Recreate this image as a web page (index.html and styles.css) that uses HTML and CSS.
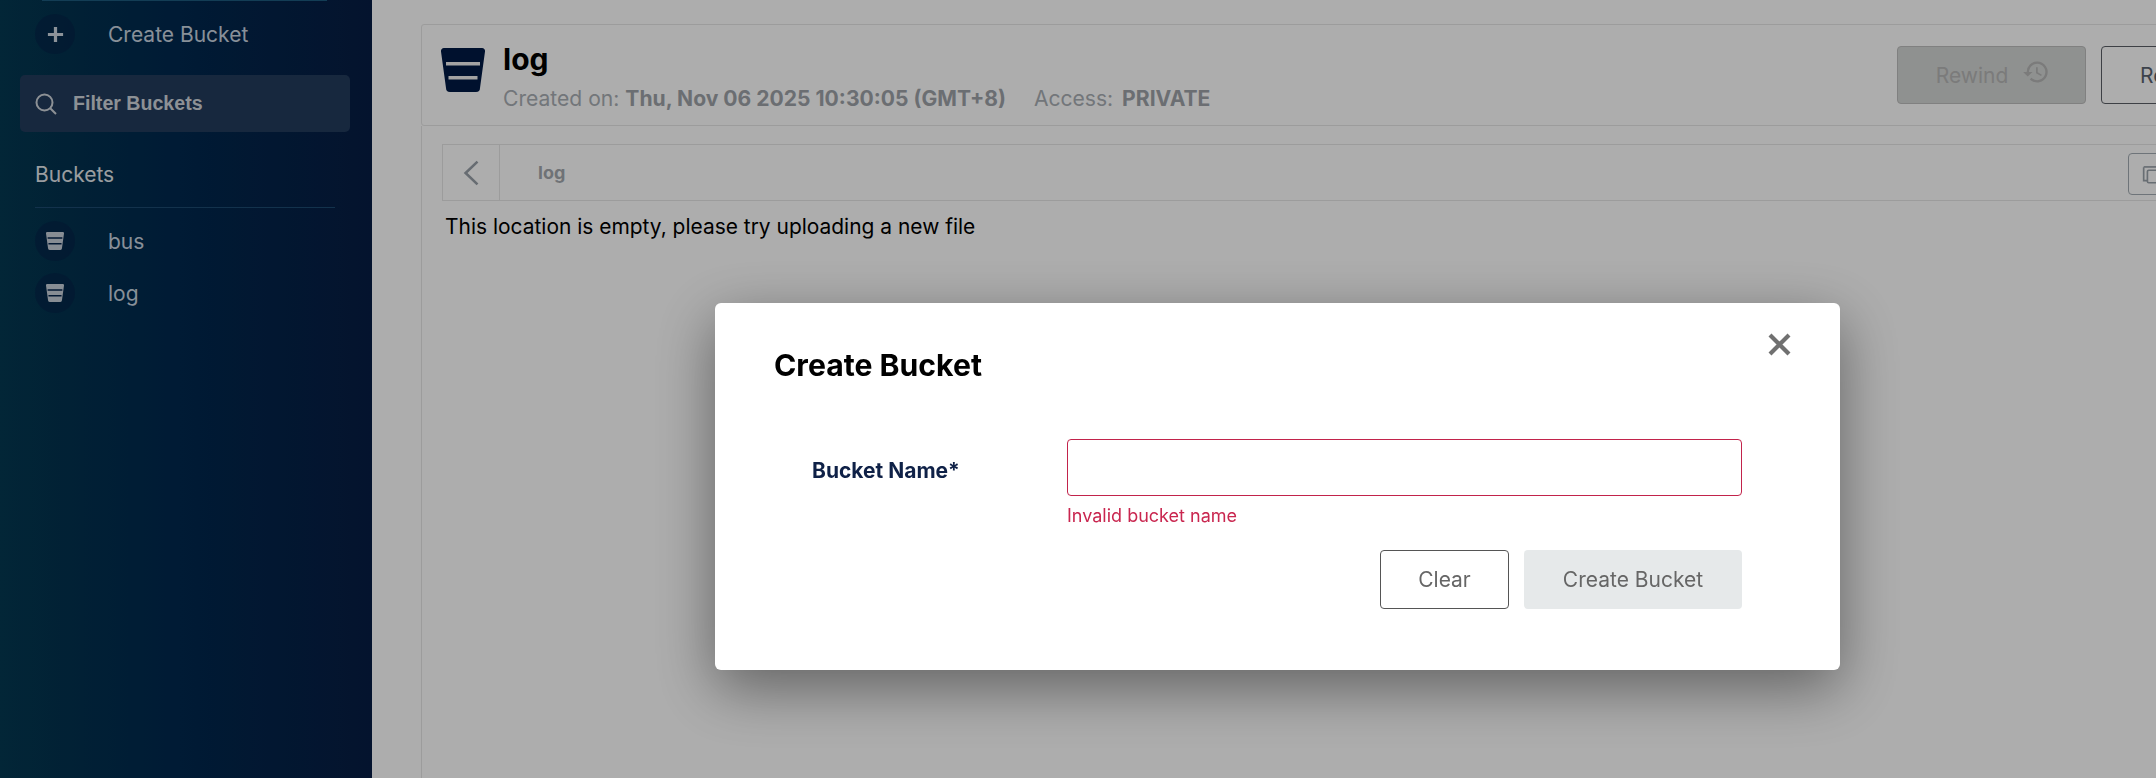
FILE: index.html
```html
<!DOCTYPE html>
<html lang="en">
<head>
<meta charset="utf-8">
<title>Create Bucket</title>
<link rel="stylesheet" href="styles.css">
</head>
<body>
<div class="app">
  <aside class="sidebar">
    <div class="top-line"></div>
    <div class="nav-row create-row">
      <span class="nav-circle">
        <svg class="plus" viewBox="0 0 20 20"><path d="M10 2v16M2 10h16"/></svg>
      </span>
      <span class="nav-text">Create Bucket</span>
    </div>
    <div class="filter">
      <svg class="search" viewBox="0 0 22 22"><circle cx="9.500" cy="9.500" r="8"/><path d="M15.200 15.200 21 21"/></svg>
      <span class="filter-text">Filter Buckets</span>
    </div>
    <div class="section-title">Buckets</div>
    <div class="section-rule"></div>
    <div class="nav-row bucket-row">
      <span class="nav-circle">
        <svg class="side-bucket" viewBox="0 0 44 44"><path d="M3 0h38a3 3 0 0 1 3 3.400L39 40a4 4 0 0 1-4 4H9a4 4 0 0 1-4-4L0 3.400A3 3 0 0 1 3 0z"/><path class="cut" d="M4 13h36v3.500H4zM6 27h32v3.500H6z"/></svg>
      </span>
      <span class="nav-text">bus</span>
    </div>
    <div class="nav-row bucket-row">
      <span class="nav-circle">
        <svg class="side-bucket" viewBox="0 0 44 44"><path d="M3 0h38a3 3 0 0 1 3 3.400L39 40a4 4 0 0 1-4 4H9a4 4 0 0 1-4-4L0 3.400A3 3 0 0 1 3 0z"/><path class="cut" d="M4 13h36v3.500H4zM6 27h32v3.500H6z"/></svg>
      </span>
      <span class="nav-text">log</span>
    </div>
  </aside>

  <main class="main">
    <div class="content">
      <header class="head-panel">
        <svg class="head-icon" viewBox="0 0 44 44"><path class="fill" d="M3 0h38a3 3 0 0 1 3 3.400L39 40a4 4 0 0 1-4 4H9a4 4 0 0 1-4-4L0 3.400A3 3 0 0 1 3 0z"/><path class="bar" d="M5 14h34v3.500H5zM7.500 28h29v3.500H7.500z"/></svg>
        <div class="head-text">
          <div class="bucket-name">log</div>
          <div class="bucket-meta">
            <span class="meta-item">Created on: <b>Thu, Nov 06 2025 10:30:05 (GMT+8)</b></span>
            <span class="meta-item">Access: <b class="access">PRIVATE</b></span>
          </div>
        </div>
        <div class="head-actions">
          <button class="btn-rewind" type="button">
            <span>Rewind</span>
            <svg class="history" viewBox="0 0 24 24"><path d="M13 3a9 9 0 0 0-9 9H1l3.900 3.900L9 12H6a7 7 0 1 1 2.100 5l-1.400 1.400A9 9 0 1 0 13 3zm-1 5v5l4.300 2.500.7-1.200-3.500-2.100V8z"/></svg>
          </button>
          <button class="btn-refresh" type="button">Refresh</button>
        </div>
      </header>
      <section class="body-panel">
        <div class="crumbs">
          <span class="back">
            <svg class="chevron" viewBox="0 0 14 24"><path d="M13 1.500 2 12l11 10.500"/></svg>
          </span>
          <span class="crumb-text">log</span>
          <span class="copy-btn">
            <svg class="copy" viewBox="0 0 24 24"><path d="M7 20H2V4"/><path d="M2 3.500h15"/><rect x="6.500" y="7.500" width="16" height="15" rx="1.500"/></svg>
          </span>
        </div>
        <p class="empty">This location is empty, please try uploading a new file</p>
      </section>
    </div>
  </main>
</div>

<div class="overlay">
  <div class="modal">
    <svg class="close" viewBox="0 0 23 23"><path d="M2 2l19 19M21 2 2 21"/></svg>
    <h2 class="modal-title">Create Bucket</h2>
    <div class="field">
      <label class="field-label" for="bucket">Bucket Name*</label>
      <div class="field-main">
        <input class="field-input" id="bucket" type="text">
        <div class="field-error">Invalid bucket name</div>
      </div>
    </div>
    <div class="modal-actions">
      <button class="btn-clear" type="button">Clear</button>
      <button class="btn-create" type="button">Create Bucket</button>
    </div>
  </div>
</div>
</body>
</html>
```

FILE: styles.css
```css
* { box-sizing: border-box; }
html, body { margin: 0; height: 100%; overflow: hidden; }
body { font-family: Inter, "Liberation Sans", sans-serif; background: #fff; color: #000; }

.app { display: flex; height: 778px; width: 2156px; }

.sidebar {
  flex: 0 0 372px;
  padding: 0 22px 0 0;
  background: linear-gradient(90deg, #033851 0%, #02304e 22%, #00284e 48%, #071d44 100%);
  color: #d6e0ea;
}
.top-line { height: 1px; margin-left: 42px; width: 285px; background: #1d5a7e; }
.nav-row { display: flex; align-items: center; padding-left: 35px; }
.create-row { height: 40px; margin-top: 13px; }
.bucket-row { height: 40px; margin-bottom: 12px; }
.nav-circle {
  flex: 0 0 40px; height: 40px; border-radius: 50%;
  background: rgba(6, 24, 68, 0.35);
  display: flex; align-items: center; justify-content: center;
  margin-right: 33px;
}
.nav-text { font-size: 21px; color: #c9d4e0; }
.plus { width: 19px; height: 19px; fill: none; stroke: #ced8e2; stroke-width: 3.400; }

.filter {
  display: flex; align-items: center;
  height: 57px; margin: 21px 0 0 20px; width: 330px;
  padding-left: 15px; border-radius: 5px;
  background: #233b5c;
}
.search { width: 22px; height: 22px; fill: none; stroke: #d0d6dc; stroke-width: 2; margin-right: 16px; }
.filter-text { font: bold 19.600px "Liberation Sans", sans-serif; color: #d0d6dc; }

.section-title { margin: 29px 0 0 35px; font-size: 21px; line-height: 28px; color: #e4e8ec; }
.section-rule { margin: 18px 0 13px 35px; width: 300px; height: 1px; background: #1c4a70; }
.side-bucket { width: 18px; height: 18px; fill: #c8d0da; }
.side-bucket .cut { fill: #03244c; }

.main { flex: 1 1 0; min-width: 0; overflow: hidden; padding: 24px 0 0 49px; }
.content { width: 1900px; }

.head-panel {
  display: flex; align-items: flex-start;
  height: 102px; padding: 23px 0 0 19px;
  border: 1px solid #e6e6e6; border-radius: 3px;
}
.head-icon { width: 44px; height: 44px; flex: none; margin-right: 18px; }
.head-icon .fill { fill: #001a45; }
.head-icon .bar { fill: #f0f0f0; }
.head-text { width: 1394px; margin-top: -7px; }
.bucket-name { font-size: 30px; line-height: 36px; font-weight: 700; }
.bucket-meta { display: flex; gap: 28px; margin-top: 8px; font-size: 21.100px; line-height: 28px; color: #a9aeb4; }
.meta-item b { color: #9ea3a9; font-weight: 700; }
.access { margin-left: 3px; }

.head-actions { display: flex; gap: 15px; margin-top: -2px; }
button { font-family: inherit; }
.btn-rewind {
  display: flex; align-items: center; justify-content: center; gap: 14px;
  width: 189px; height: 58px; padding: 0 0 0 3px; font-size: 21px;
  background: #d3d6d4; border: 1px solid #bdbdbd; border-radius: 4px; color: #b5b5b5;
}
.history { width: 28px; height: 28px; fill: #b5b5b5; margin-top: -6px; }
.btn-refresh {
  width: 160px; height: 58px; font-size: 21px; text-align: left; padding-left: 38px;
  background: transparent; border: 1px solid #5a5f66; border-radius: 4px; color: #5a6470;
}

.body-panel { padding: 18px 0 0 20px; height: 660px; border-left: 1px solid #e6e6e6; }
.crumbs {
  display: flex; align-items: center; height: 57px; width: 1800px;
  border: 1px solid #e6e6e6;
}
.back {
  flex: 0 0 57px; height: 100%;
  display: flex; align-items: center; justify-content: center;
  border-right: 1px solid #e6e6e6;
}
.chevron { width: 16px; height: 26px; fill: none; stroke: #98a0a8; stroke-width: 2.400; }
.crumb-text { font-size: 18px; font-weight: 700; color: #a4a9ae; margin-left: 38px; width: 1590px; }
.copy-btn {
  flex: none; width: 42px; height: 42px; margin-top: 2px;
  border: 1px solid #a3abb3; border-radius: 4px;
  display: flex; align-items: center; padding-left: 13px;
}
.copy { width: 20px; height: 20px; fill: none; stroke: #9aa2aa; stroke-width: 2; overflow: visible; }
.empty { margin: 13px 0 0 3px; font-size: 20.950px; line-height: 26px; color: #000; }

.overlay {
  position: fixed; inset: 0;
  background: rgba(0, 0, 0, 0.32);
}
.modal {
  position: absolute; left: 715px; top: 303px;
  width: 1125px; height: 367px;
  padding: 44px 98px 0 60px;
  background: #fff; border-radius: 6px;
  box-shadow: 0 18px 60px rgba(0, 0, 0, 0.44);
}
.close {
  position: absolute; left: 1053px; top: 30px;
  width: 23px; height: 23px; fill: none; stroke: #707070; stroke-width: 4.200;
}
.modal-title { margin: 0 0 0 -1px; font-size: 30.200px; line-height: 36px; font-weight: 700; color: #000; }
.field { display: flex; margin-top: 56px; }
.field-label { width: 292px; padding: 19px 0 0 37px; font-size: 21px; line-height: 26px; font-weight: 700; color: #0f2147; }
.field-main { width: 675px; }
.field-input {
  display: block; width: 100%; height: 57px;
  border: 1px solid #c2234b; border-radius: 4px; background: #fff; outline: none;
}
.field-error { margin-top: 9px; font-size: 18px; line-height: 22px; color: #c9264f; }
.modal-actions { display: flex; justify-content: flex-end; gap: 15px; width: 967px; margin-top: 23px; }
.btn-clear {
  width: 129px; height: 59px; font-size: 21px;
  background: #fff; border: 1px solid #555; border-radius: 4px; color: #666;
}
.btn-create {
  width: 218px; height: 59px; font-size: 21px;
  background: #e6e9ea; border: 0; border-radius: 4px; color: #666;
}
```
